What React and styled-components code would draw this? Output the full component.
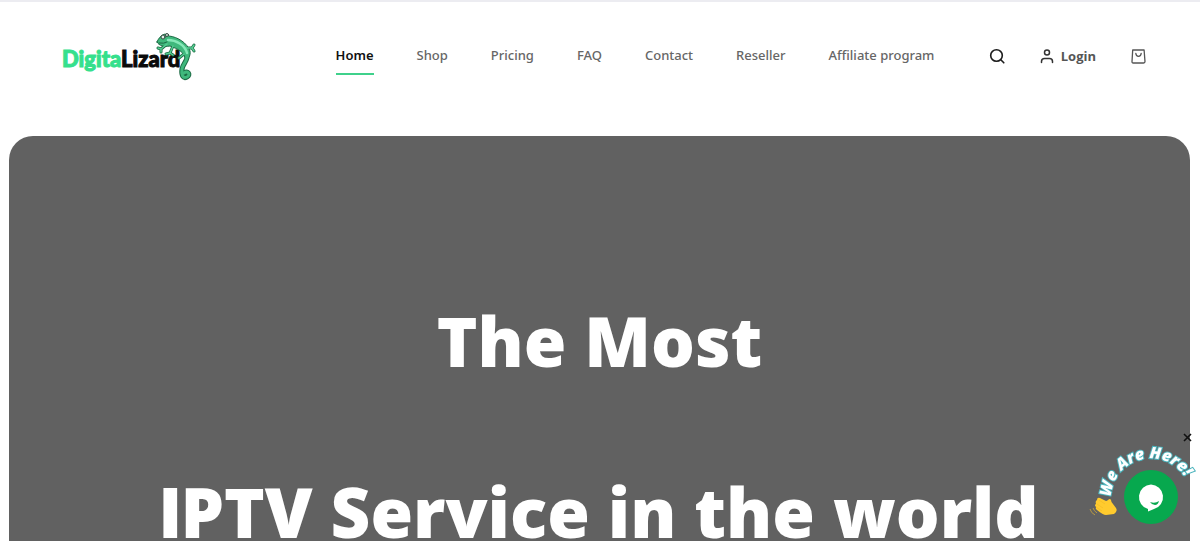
import styled, { createGlobalStyle } from 'styled-components'

const links = ['Home', 'Shop', 'Pricing', 'FAQ', 'Contact', 'Reseller', 'Affiliate program']

const Lizard = () => (
  <svg viewBox="0 0 44 54" width="44" height="54" aria-hidden="true" fill="none" strokeLinecap="round" strokeLinejoin="round">
    <path d="M34 24C36 31 30 34 29 40S30 50 34 48S35 41 31 44" stroke="#1d6b45" strokeWidth="5" />
    <path d="M14 15L8 20M8 20L5 19M8 20V23M20 17L17 24M17 24L13 25M17 24L20 26M33 19L39 19M39 19L41 16M39 19L41 22M31 25L26 29" stroke="#1d6b45" strokeWidth="3" />
    <path d="M4 13C5 10 8 6 12 5L16 7C25 8 34 14 37 22C38 28 34 31 32 29C31 23 25 20 17 17C11 18 6 17 4 13Z" fill="#3fb87c" stroke="#1d6b45" strokeWidth="1" />
    <path d="M34 24C36 31 30 34 29 40S30 50 34 48S35 41 31 44" stroke="#3fb87c" strokeWidth="3" />
    <path d="M14 15L8 20M8 20L5 19M8 20V23M20 17L17 24M17 24L13 25M17 24L20 26M33 19L39 19M39 19L41 16M39 19L41 22M31 25L26 29" stroke="#55cd92" strokeWidth="1.5" />
    <path d="M15 11C23 11 32 16 34 24" stroke="#86e8b8" strokeWidth="2.5" />
    <path d="M6 14Q11 15 14 13" stroke="#1d6b45" strokeWidth="1" />
    <circle cx="10" cy="8" r="2" fill="#e1efe8" stroke="#35483f" />
    <circle cx="14" cy="6" r="1.5" fill="#e1efe8" stroke="#35483f" />
  </svg>
)

const SearchIcon = () => (
  <svg viewBox="0 0 16 16" width="16" height="16" aria-hidden="true" fill="none" stroke="#1c1c1c" strokeWidth="1.6" strokeLinecap="round">
    <circle cx="7.5" cy="7.5" r="5.8" />
    <path d="M11.8 11.8l3 3" />
  </svg>
)

const UserIcon = () => (
  <svg viewBox="0 0 14 16" width="14" height="16" aria-hidden="true" fill="none" stroke="#333" strokeWidth="1.5" strokeLinecap="round">
    <circle cx="7" cy="4.5" r="2.5" />
    <path d="M1.5 14.5V13.5Q1.5 10.5 4.5 10.5H9.5Q12.5 10.5 12.5 13.5V14.5" />
  </svg>
)

const BagIcon = () => (
  <svg viewBox="0 0 15 15" width="15" height="15" aria-hidden="true" fill="none" stroke="#555" strokeWidth="1.3" strokeLinecap="round" strokeLinejoin="round">
    <path d="M1.7 1H13.1L14 12.6Q14 14 12.6 14H2.2Q.9 14 1 12.6Z" />
    <path d="M4.8 4.3Q5 7.3 7.5 7.3T10.2 4.3" />
  </svg>
)

const ChatArt = () => (
  <svg viewBox="0 0 112 96" width="112" height="96" role="img" aria-label="We are here">
    <defs>
      <path id="chat-arc" d="M23 68A40 40 0 0 1 101 57L104 66" />
    </defs>
    <circle cx="63" cy="68" r="27" fill="#07a84e" />
    <path d="M63 55.5a12.5 12.5 0 0 1 3 24.5L60 82.5V80A12.5 12.5 0 0 1 63 55.5Z" fill="#fff" />
    <path d="M62 73Q67 75 71 72Q70 76 67 76Q64 76 62 73Z" fill="#07a84e" />
    <ArcText>
      <textPath href="#chat-arc">We Are Here!</textPath>
    </ArcText>
    <path d="M9 71Q9 68 12 69L18 72Q19 72 20 71Q22 69 23 71Q23 73 25 75L28 79Q30 82 26 85L18 86Q15 86 9 81Q7 80 8 78Q6 76 8 75Q7 72 9 71Z" fill="#ffcb2e" />
    <path d="M9 75L15 79M8 78L14 82M11 71L17 75" stroke="#f2b824" strokeWidth=".6" />
    <path d="M2 80Q3 84 7 86M5 79Q6 82 9 84" fill="none" stroke="#b99a42" strokeWidth="1" />
  </svg>
)

const App = () => {
  return (
    <Page>
      <GlobalStyle />
      <Header>
        <Logo href="#" aria-label="DigitaLizard">
          <Brand><span>Digita</span>Lizard</Brand>
          <Lizard />
        </Logo>
        <Nav>
          {links.map((name) => (
            <NavLink key={name} href="#" $active={name === 'Home'}>{name}</NavLink>
          ))}
        </Nav>
        <Tools>
          <IconButton aria-label="Search"><SearchIcon /></IconButton>
          <Login href="#"><UserIcon />Login</Login>
          <IconButton aria-label="Cart"><BagIcon /></IconButton>
        </Tools>
      </Header>
      <Hero>
        <Title>
          <Line>The Most</Line>
          <Line><PlainCap>I</PlainCap>PTV Service in the world</Line>
        </Title>
      </Hero>
      <Chat>
        <Close aria-label="Close">
          <svg viewBox="0 0 9 9" width="9" height="9" aria-hidden="true" stroke="#111" strokeWidth="1.6">
            <path d="M1 1L8 8M8 1L1 8" />
          </svg>
        </Close>
        <ChatButton><ChatArt /></ChatButton>
      </Chat>
    </Page>
  )
}

const GlobalStyle = createGlobalStyle`
  *{
    box-sizing:border-box;
  }
  html{
    scrollbar-width:none;
  }
  body{
    margin:0;
    background-color:#fff;
    font-family:"Noto Sans", "Open Sans", sans-serif;
  }
  button{
    padding:0;
    border:0;
    background:none;
    cursor:pointer;
  }
  a{
    text-decoration:none;
  }
  svg{
    display:block;
  }
`

const Page = styled.div`
  display:flex;
  flex-direction:column;
  min-height:100vh;
  border-top:2px solid #ececf1;
`

const Header = styled.header`
  display:flex;
  align-items:center;
  justify-content:space-between;
  height:108px;
  padding:0 54px 0 62px;
`

const Logo = styled.a`
  display:flex;
  align-items:center;
`

const Brand = styled.span`
  margin-right:-27px;
  padding-top:6px;
  color:#0b0b0b;
  font-family:Lato, "Liberation Sans", sans-serif;
  font-size:22px;
  font-weight:900;
  line-height:28px;
  -webkit-text-stroke:1px currentColor;

  span{
    color:#35e08c;
  }
`

const Nav = styled.nav`
  display:flex;
  gap:43px;
  margin-left:84px;
`

const NavLink = styled.a`
  padding:8px 0 9px;
  border-bottom:2px solid ${({ $active }) => ($active ? '#3fd18b' : 'transparent')};
  color:${({ $active }) => ($active ? '#111' : '#666')};
  font-size:13px;
  font-weight:${({ $active }) => ($active ? 600 : 500)};
  line-height:18px;
  white-space:nowrap;
`

const Tools = styled.div`
  display:flex;
  align-items:center;
  gap:35px;
`

const IconButton = styled.button`
  display:flex;
`

const Login = styled.a`
  display:flex;
  align-items:center;
  gap:7px;
  color:#555;
  font-family:"Open Sans", "Noto Sans", sans-serif;
  font-size:13px;
  font-weight:700;
  line-height:18px;
`

const Hero = styled.main`
  flex:1;
  margin:26px 10px 0 9px;
  padding:156px 20px 120px;
  border-radius:24px 24px 0 0;
  background-color:#616161;
`

const Title = styled.h1`
  display:flex;
  flex-direction:column;
  gap:75px;
  margin:0;
  color:#fff;
  font-size:69px;
  font-weight:900;
  line-height:96px;
  text-align:center;
  white-space:nowrap;
`

const Line = styled.span`
  display:block;
  height:96px;
`

// Inter draws the capital I without serifs
const PlainCap = styled.span`
  font-family:Inter, sans-serif;
`

const Chat = styled.aside`
  position:fixed;
  right:0;
  bottom:16px;
`

const Close = styled.button`
  position:absolute;
  top:4px;
  right:8px;
`

const ChatButton = styled.button`
  display:block;
`

const ArcText = styled.text`
  fill:#fff;
  stroke:#4bb4bd;
  stroke-width:2px;
  paint-order:stroke;
  font-family:"Open Sans", "Noto Sans", sans-serif;
  font-size:16px;
  font-style:italic;
  font-weight:800;
`

export default App
